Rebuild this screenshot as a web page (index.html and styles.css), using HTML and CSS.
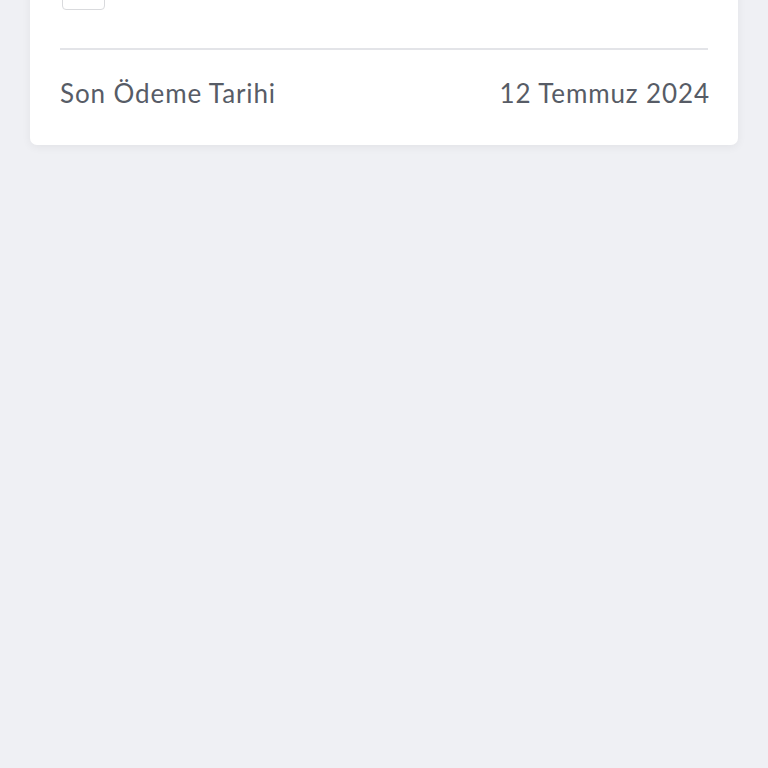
FILE: index.html
```html
<!DOCTYPE html>
<html lang="tr">
<head>
  <meta charset="UTF-8" />
  <title>Ödeme Detayı</title>
  <meta name="viewport" content="width=device-width, initial-scale=1" />
  <link rel="stylesheet" href="styles.css">
</head>
<body>
  <div class="card">
    <div class="option-row">
      <span class="check"></span>
    </div>
    <div class="detail-row">
      <span class="label">Son Ödeme Tarihi</span>
      <span class="value">12 Temmuz 2024</span>
    </div>
  </div>
</body>
</html>
```

FILE: styles.css
```css
html, body { height: 100%; }
body {
  background: #eff0f4;
  color: #575c66;
  font-family: Lato, 'Noto Sans', sans-serif;
  margin: 0; padding: 0 30px;
}
.card {
  background: #fff;
  margin-top: -40px;
  padding: 0 30px;
  border-radius: 0 0 7px 7px;
  box-shadow: 0 2px 10px #0000000f;
}
.option-row {
  padding-top: 8px;
  height: 80px;
  border-bottom: 2px solid #e3e4e8;
}
.check {
  display: block;
  margin-left: 2px;
  width: 41px; height: 40px;
  border: 1.5px solid #d9dadd;
  border-radius: 4px;
}
.detail-row {
  display: flex; justify-content: space-between; align-items: center;
  height: 85px;
  padding-bottom: 10px;
  font-size: 26px;
  letter-spacing: 0.9px;
}
.value { margin-right: -2px; }
```
